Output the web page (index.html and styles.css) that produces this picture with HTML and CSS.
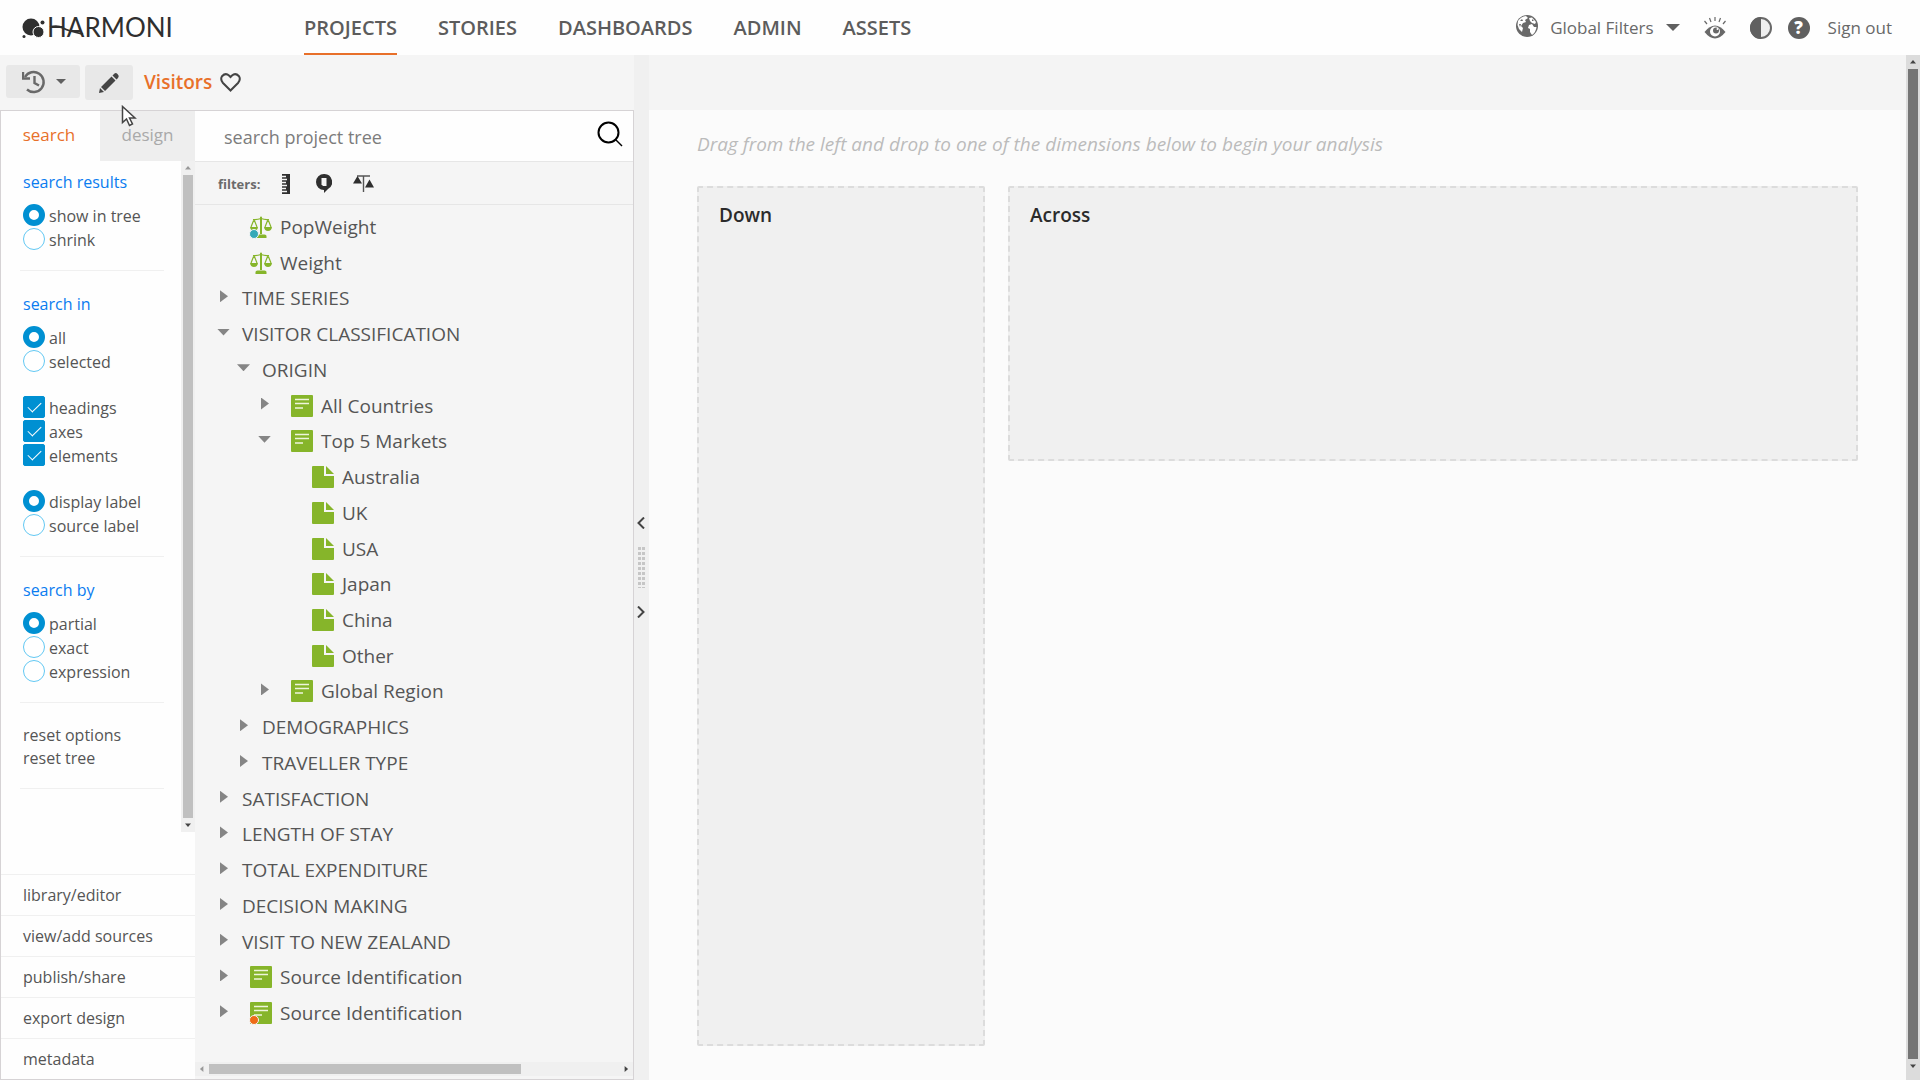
FILE: index.html
```html
<!DOCTYPE html>
<html lang="en">
  <head>
    <meta charset="UTF-8" />
    <meta name="viewport" content="width=device-width, initial-scale=1.0" />
    <title>Harmoni - Visitors</title>
    <link rel="stylesheet" href="styles.css">
  </head>
  <body>
    <!-- Shared icons -->
    <svg class="sprite" aria-hidden="true">
      <symbol id="axis" viewBox="0 0 22 22">
        <rect width="22" height="22" rx="1" fill="#86b52a" />
        <path d="M4 4.500H18M4 8.500H18M4 13H12" stroke="#eef5dc" stroke-width="1.600" />
      </symbol>
      <symbol id="element" viewBox="0 0 22 22">
        <path d="M1 0H12V10H22V21a1 1 0 0 1-1 1H1a1 1 0 0 1-1-1V1a1 1 0 0 1 1-1Z M14 0L22 8H14Z" fill="#86b52a" />
      </symbol>
      <symbol id="scale" viewBox="0 0 22 22">
        <path d="M10 1.500a1 1 0 0 1 2 0V18H10ZM5.500 20q0-1.500 2-1.500H14.500q2 0 2 1.500V22H5.500ZM0 11H8Q7.500 15 4 15T0 11ZM14 11H22Q21.500 15 18 15T14 11Z" fill="#86b52a" />
        <path d="M3 3.500Q7 4 11 2.500Q15 4 19 3.500M4 3.500L1 11M4 3.500L7 11M18 3.500L15 11M18 3.500L21 11" fill="none" stroke="#86b52a" stroke-width="1.200" />
      </symbol>
    </svg>

    <header class="header">
      <a class="logo" href="#" aria-label="Harmoni">
        <svg width="160" height="34" viewBox="0 0 160 34">
          <g fill="#2f2f2f">
            <circle cx="9" cy="15" r="8.500" />
            <circle cx="16.500" cy="20" r="5.500" stroke="#fff" stroke-width="1" />
            <circle cx="20.500" cy="10.500" r="2" />
            <circle cx="2" cy="24.500" r="1.500" />
          </g>
          <text class="logo-text" x="25" y="25">HARMONI</text>
          <path d="M28 15Q36 13 41 16T61 22" fill="none" stroke="#2f2f2f" stroke-width="2" />
        </svg>
      </a>
      <nav class="nav">
        <a class="active" href="#">PROJECTS</a>
        <a href="#">STORIES</a>
        <a href="#">DASHBOARDS</a>
        <a href="#">ADMIN</a>
        <a href="#">ASSETS</a>
      </nav>
      <div class="header-tools">
        <button class="global-filters" type="button">
          <svg class="globe" width="22" height="22" viewBox="0 0 22 22">
            <circle cx="11" cy="11" r="11" fill="#696969" />
            <path d="M2 6Q5 1.500 10 1L12 3L9 5L10 7L7 8L5 11L7 13L6 17L3 14L1.500 10ZM13 3L16 2.500L20 7L19 9L16 8L14 6ZM13 10L16 9L18 12L20.500 12Q20 17 16 20L14 17L14 14L12 13Z" fill="#fff" />
            <path d="M4 6L6 4L7 6ZM3 9L5 9L4 12ZM16 4L18 6L16 6Z" fill="#696969" />
          </svg>
          <span>Global Filters</span>
          <svg width="14" height="7" viewBox="0 0 14 7"><path d="M0 0H14L7 7Z" fill="#606060" /></svg>
        </button>
        <button type="button" aria-label="Preview">
          <svg width="22" height="24" viewBox="0 0 22 24">
            <path d="M.500 16Q11 3 21.500 16Q11 29 .500 16Z" fill="#696969" />
            <circle cx="11" cy="15.500" r="5" fill="#fff" />
            <circle cx="12" cy="14.500" r="3" fill="#696969" />
            <circle cx="13.500" cy="13" r="1" fill="#fff" />
            <path d="M.500 5L3 8M5.500 2L7 6M11 1V5M16.500 2L15 6M21.500 5L19 8" stroke="#696969" stroke-width="1.200" />
          </svg>
        </button>
        <button class="contrast" type="button" aria-label="Contrast">
          <svg width="22" height="22" viewBox="0 0 22 22">
            <circle cx="11" cy="11" r="10" fill="#eee" stroke="#696969" stroke-width="2" />
            <path d="M11 0A11 11 0 0 0 11 22Z" fill="#606060" />
          </svg>
        </button>
        <button class="help" type="button" aria-label="Help">?</button>
        <a class="sign-out" href="#">Sign out</a>
      </div>
    </header>

    <div class="workspace">
      <section class="left">
        <div class="toolbar">
          <button class="history" type="button" aria-label="History">
            <svg width="24" height="24" viewBox="0 0 24 24">
              <path d="M3 7A10 10 0 1 1 5 19.500" fill="none" stroke="#696969" stroke-width="2.400" />
              <path d="M1 2V8.500H8M12.500 6V13L17 15.500" fill="none" stroke="#696969" stroke-width="2.400" />
            </svg>
            <svg width="10" height="5" viewBox="0 0 10 5"><path d="M0 0H10L5 5Z" fill="#606060" /></svg>
          </button>
          <button class="edit" type="button" aria-label="Edit">
            <svg width="20" height="20" viewBox="0 0 20 20">
              <path d="M0 20L1 15L5 19ZM2 14L12.500 3.500L16.500 7.500L6 18ZM13.500 2.500L15.500.500Q17 -.500 18.500 1L19.500 2.500Q20 3.500 19 5L17.500 6.500Z" fill="#444" />
            </svg>
          </button>
          <h1>Visitors</h1>
          <button class="favourite" type="button" aria-label="Favourite">
            <svg width="21" height="19" viewBox="0 0 21 19">
              <path d="M10.500 17.500L3 10Q0 6.500 2 3.200Q5.500-.500 9 2.500L10.500 4L12 2.500Q15.500-.500 19 3.200Q21 6.500 18 10Z" fill="none" stroke="#444" stroke-width="2" />
            </svg>
          </button>
        </div>

        <div class="panel">
          <aside class="sidebar">
            <div class="tabs">
              <button class="tab active" type="button">search</button>
              <button class="tab" type="button">design</button>
            </div>

            <div class="options-scroll">
              <form class="options">
                <div class="group">
                  <h2>search results</h2>
                  <label><input type="radio" name="results" checked />show in tree</label>
                  <label><input type="radio" name="results" />shrink</label>
                </div>
                <div class="group">
                  <h2>search in</h2>
                  <label><input type="radio" name="scope" checked />all</label>
                  <label class="last"><input type="radio" name="scope" />selected</label>
                  <label><input type="checkbox" checked />headings</label>
                  <label><input type="checkbox" checked />axes</label>
                  <label class="last"><input type="checkbox" checked />elements</label>
                  <label><input type="radio" name="label" checked />display label</label>
                  <label><input type="radio" name="label" />source label</label>
                </div>
                <div class="group">
                  <h2>search by</h2>
                  <label><input type="radio" name="match" checked />partial</label>
                  <label><input type="radio" name="match" />exact</label>
                  <label><input type="radio" name="match" />expression</label>
                </div>
                <div class="group">
                  <button type="reset">reset options</button>
                  <button type="button">reset tree</button>
                </div>
              </form>
              <div class="scrollbar" aria-hidden="true">
                <i class="arrow up faded"></i>
                <i class="thumb"></i>
                <i class="arrow down"></i>
              </div>
            </div>

            <nav class="side-links">
              <a href="#">library/editor</a>
              <a href="#">view/add sources</a>
              <a href="#">publish/share</a>
              <a href="#">export design</a>
              <a href="#">metadata</a>
            </nav>
          </aside>

          <div class="project">
            <div class="search-box">
              <input type="text" placeholder="search project tree" aria-label="search project tree" />
              <button type="button" aria-label="Search">
                <svg width="26" height="26" viewBox="0 0 26 26">
                  <circle cx="11.500" cy="11.500" r="10" fill="none" stroke="#000" stroke-width="2" />
                  <path d="M18.500 18.500L25 25" stroke="#000" stroke-width="1.400" />
                </svg>
              </button>
            </div>

            <div class="filters">
              <span>filters:</span>
              <button type="button" aria-label="Axes">
                <svg width="8" height="20" viewBox="0 0 8 20">
                  <path d="M0 0H8V20H0Z" fill="#2f2f2f" />
                  <path d="M0 2.500H4M0 5.500H5M0 8.500H4M0 11.500H5M0 14.500H4M0 17.500H5" stroke="#f5f5f5" stroke-width="1.500" />
                </svg>
              </button>
              <button type="button" aria-label="Elements">
                <svg width="16" height="19" viewBox="0 0 16 19">
                  <path d="M8 0A8 8 0 0 1 12 15L8 19V16A8 8 0 0 1 8 0Z" fill="#2f2f2f" />
                  <path d="M5.500 4H10.500V12H7L5.500 10.500Z" fill="#f5f5f5" />
                </svg>
              </button>
              <button type="button" aria-label="Weights">
                <svg width="21" height="17" viewBox="0 0 21 17">
                  <path d="M4 1H17M10.500 1V17" stroke="#555" stroke-width="1.400" />
                  <path d="M4.500 1L9 8.500H0ZM16.500 4.500L21 12.500H12Z" fill="#2f2f2f" />
                </svg>
              </button>
            </div>

            <ul class="tree">
              <li class="item"><span class="icon"><svg><use href="#scale" /></svg><i class="dot blue"></i></span>PopWeight</li>
              <li class="item"><span class="icon"><svg><use href="#scale" /></svg></span>Weight</li>
              <li><button class="toggle" aria-label="Expand"></button>TIME SERIES</li>
              <li><button class="toggle open" aria-label="Collapse"></button>VISITOR CLASSIFICATION</li>
              <li class="level-1"><button class="toggle open" aria-label="Collapse"></button>ORIGIN</li>
              <li class="level-2"><button class="toggle" aria-label="Expand"></button><span class="icon"><svg><use href="#axis" /></svg></span>All Countries</li>
              <li class="level-2"><button class="toggle open" aria-label="Collapse"></button><span class="icon"><svg><use href="#axis" /></svg></span>Top 5 Markets</li>
              <li class="item level-3"><span class="icon"><svg><use href="#element" /></svg></span>Australia</li>
              <li class="item level-3"><span class="icon"><svg><use href="#element" /></svg></span>UK</li>
              <li class="item level-3"><span class="icon"><svg><use href="#element" /></svg></span>USA</li>
              <li class="item level-3"><span class="icon"><svg><use href="#element" /></svg></span>Japan</li>
              <li class="item level-3"><span class="icon"><svg><use href="#element" /></svg></span>China</li>
              <li class="item level-3"><span class="icon"><svg><use href="#element" /></svg></span>Other</li>
              <li class="level-2"><button class="toggle" aria-label="Expand"></button><span class="icon"><svg><use href="#axis" /></svg></span>Global Region</li>
              <li class="level-1"><button class="toggle" aria-label="Expand"></button>DEMOGRAPHICS</li>
              <li class="level-1"><button class="toggle" aria-label="Expand"></button>TRAVELLER TYPE</li>
              <li><button class="toggle" aria-label="Expand"></button>SATISFACTION</li>
              <li><button class="toggle" aria-label="Expand"></button>LENGTH OF STAY</li>
              <li><button class="toggle" aria-label="Expand"></button>TOTAL EXPENDITURE</li>
              <li><button class="toggle" aria-label="Expand"></button>DECISION MAKING</li>
              <li><button class="toggle" aria-label="Expand"></button>VISIT TO NEW ZEALAND</li>
              <li><button class="toggle" aria-label="Expand"></button><span class="icon"><svg><use href="#axis" /></svg></span>Source Identification</li>
              <li><button class="toggle" aria-label="Expand"></button><span class="icon"><svg><use href="#axis" /></svg><i class="dot orange"></i></span>Source Identification</li>
            </ul>

            <div class="scrollbar horizontal" aria-hidden="true">
              <i class="arrow prev faded"></i>
              <span class="track"><i class="thumb"></i></span>
              <i class="arrow next"></i>
            </div>
          </div>
        </div>
      </section>

      <div class="splitter">
        <button type="button" aria-label="Collapse left">
          <svg width="8" height="12" viewBox="0 0 8 12"><path d="M7 .500L1.500 6L7 11.500" fill="none" stroke="#444" stroke-width="2" /></svg>
        </button>
        <span class="grip"></span>
        <button type="button" aria-label="Collapse right">
          <svg width="8" height="12" viewBox="0 0 8 12"><path d="M1 .500L6.500 6L1 11.500" fill="none" stroke="#444" stroke-width="2" /></svg>
        </button>
      </div>

      <main class="analysis">
        <div class="analysis-bar"></div>
        <div class="canvas">
          <p class="hint">Drag from the left and drop to one of the dimensions below to begin your analysis</p>
          <div class="dimensions">
            <section class="drop down-zone"><h2>Down</h2></section>
            <section class="drop across-zone"><h2>Across</h2></section>
          </div>
        </div>
      </main>

      <div class="scrollbar page-scroll" aria-hidden="true">
        <i class="arrow up"></i>
        <i class="thumb"></i>
        <i class="arrow down"></i>
      </div>
    </div>

    <!-- Mouse pointer -->
    <svg class="pointer" width="16" height="22" viewBox="0 0 16 22" aria-hidden="true">
      <path d="M1.500 1.500V17.500L5.500 14L8.500 20.500L11.500 19L8.500 13H14Z" fill="#fff" stroke="#444" stroke-width="1.500" />
    </svg>
  </body>
</html>
```

FILE: styles.css
```css
* {
  box-sizing: border-box;
}

body {
  margin: 0;
  height: 100vh;
  display: flex;
  flex-direction: column;
  position: relative;
  overflow: hidden;
  font-family: "Open Sans", "Noto Sans", sans-serif;
  color: #555;
  background-color: #f5f5f5;
}

button {
  padding: 0;
  border: 0;
  background: none;
  font: inherit;
  color: inherit;
  cursor: pointer;
}

button svg {
  display: block;
}

a {
  color: inherit;
  text-decoration: none;
}

.sprite {
  display: none;
}

/* Header */

.header {
  flex: none;
  height: 55px;
  padding: 0 28px 0 22px;
  display: flex;
  align-items: stretch;
  background-color: #fefefe;
}

.logo {
  width: 282px;
  padding-top: 12px;
}

.logo svg {
  display: block;
  overflow: visible;
}

.logo-text {
  font-family: Lato, sans-serif;
  font-size: 26px;
  fill: #2f2f2f;
}

.nav {
  display: flex;
  gap: 41px;
  font-size: 20px;
  font-weight: 600;
  line-height: 55px;
  color: #5c5c5c;
}

.nav a.active {
  border-bottom: 2px solid #e8702a;
}

.header-tools {
  margin-left: auto;
  display: flex;
  align-items: center;
  gap: 16px;
  font-size: 17px;
  font-weight: 500;
  color: #696969;
}

.global-filters {
  display: flex;
  align-items: center;
  gap: 12px;
  margin-right: 8px;
}

.globe {
  margin-bottom: 4px;
}

.contrast {
  margin-left: 8px;
}

.help {
  width: 22px;
  height: 22px;
  border-radius: 50%;
  background-color: #606060;
  color: #fff;
  font-weight: 800;
  line-height: 22px;
}

.sign-out {
  margin-left: 2px;
}

/* Workspace */

.workspace {
  flex: 1;
  min-height: 0;
  display: flex;
}

.left {
  width: 634px;
  display: flex;
  flex-direction: column;
}

.toolbar {
  flex: none;
  height: 55px;
  padding: 10px 6px;
  display: flex;
  align-items: flex-start;
}

.history {
  width: 74px;
  height: 33px;
  margin-right: 5px;
  padding-left: 2px;
  display: flex;
  align-items: center;
  justify-content: center;
  gap: 10px;
  border-radius: 3px;
  background-color: #e8e8e8;
}

.edit {
  width: 48px;
  height: 35px;
  margin-right: 11px;
  display: flex;
  align-items: center;
  justify-content: center;
  border-radius: 3px;
  background-color: #e8e8e8;
}

.toolbar h1 {
  margin: 0 8px 0 0;
  font-size: 19px;
  font-weight: 600;
  line-height: 35px;
  color: #e8702a;
}

.favourite {
  padding-top: 8px;
}

.panel {
  flex: 1;
  min-height: 0;
  display: flex;
  border: 1px solid #d6d3d5;
}

.sidebar {
  width: 194px;
  display: flex;
  flex-direction: column;
  background-color: #fefefe;
  font-size: 16px;
}

.tabs {
  display: flex;
  height: 50px;
  font-size: 17px;
}

.tab {
  flex: 1;
  padding-bottom: 4px;
  color: #a9a9a9;
  background-color: #eeeeee;
}

.tab.active {
  flex: none;
  width: 99px;
  padding-right: 3px;
  color: #e8702a;
  background-color: #fefefe;
}

.options-scroll {
  height: 671px;
  display: flex;
}

.options {
  flex: 1;
  padding-left: 19px;
}

.group {
  width: 144px;
  padding: 21px 0 18px 3px;
  border-bottom: 1px solid #f0f0f0;
}

.group:first-child {
  padding-top: 9px;
}

.group h2 {
  margin: 0 0 10px;
  font-size: 16px;
  font-weight: 400;
  line-height: 24px;
  color: #0a7cf0;
}

.group label {
  height: 24px;
  display: flex;
  align-items: flex-start;
  gap: 4px;
  line-height: 24px;
  white-space: nowrap;
}

.group label.last {
  margin-bottom: 22px;
}

.group button {
  display: block;
  line-height: 23px;
}

.group input {
  appearance: none;
  flex: none;
  width: 22px;
  height: 22px;
  margin: 0;
  border: 1px solid #62c8f3;
  border-radius: 50%;
  background-color: #fff;
}

.group input[type="radio"]:checked {
  border: 6px solid #0090d2;
}

.group input[type="checkbox"] {
  display: flex;
  justify-content: center;
  align-items: center;
  border-color: #0090d2;
  border-radius: 2px;
  background-color: #0090d2;
}

.group input[type="checkbox"]::after {
  content: "";
  width: 6px;
  height: 12px;
  margin-bottom: 4px;
  border: solid #fff;
  border-width: 0 1px 1px 0;
  transform: rotate(45deg);
}

.side-links {
  margin-top: auto;
}

.side-links a {
  display: block;
  padding-left: 22px;
  border-top: 1px solid #f0f0f0;
  line-height: 40px;
}

.scrollbar {
  width: 14px;
  display: flex;
  flex-direction: column;
  align-items: center;
  background-color: #f0f0f0;
}

.scrollbar .thumb {
  flex: 1;
  width: 10px;
  background-color: #c0c0c0;
}

.arrow {
  width: 6px;
  height: 14px;
  background-color: #444;
  clip-path: polygon(0 60%, 100% 60%, 50% 35%);
}

.arrow.down {
  clip-path: polygon(0 40%, 100% 40%, 50% 65%);
}

.arrow.faded {
  background-color: #999;
}

.scrollbar.horizontal {
  width: auto;
  height: 14px;
  margin-bottom: 3px;
  flex-direction: row;
}

.horizontal .track {
  flex: 1;
}

.horizontal .thumb {
  display: block;
  width: 76%;
  height: 10px;
}

.horizontal .arrow {
  width: 14px;
  height: 6px;
  clip-path: polygon(35% 50%, 60% 0, 60% 100%);
}

.horizontal .arrow.next {
  clip-path: polygon(65% 50%, 40% 0, 40% 100%);
}

/* Project tree */

.project {
  flex: 1;
  display: flex;
  flex-direction: column;
}

.search-box {
  height: 51px;
  display: flex;
  align-items: center;
  background-color: #fefefe;
  border-bottom: 1px solid #e6e6e6;
}

.search-box input {
  flex: 1;
  padding: 2px 0 0 29px;
  border: 0;
  outline: 0;
  background: none;
  font: inherit;
  font-size: 18px;
}

.search-box input::placeholder {
  color: #7c7c7c;
}

.search-box button {
  padding: 0 10px 4px 0;
}

.filters {
  height: 43px;
  padding: 1px 0 0 23px;
  display: flex;
  align-items: center;
  border-bottom: 1px solid #e6e6e6;
}

.filters span {
  font-size: 13px;
  font-weight: 700;
  color: #6b6b6b;
}

.filters button {
  margin-left: 22px;
}

.filters button + button {
  margin-left: 26px;
}

.filters button + button + button {
  margin-left: 21px;
}

.tree {
  flex: 1;
  margin: 0;
  padding: 4px 0 31px 22px;
  display: grid;
  grid-auto-rows: 1fr;
  list-style: none;
  font-size: 19px;
}

.tree li {
  display: flex;
  align-items: center;
  line-height: 24px;
  white-space: nowrap;
}

.tree .item {
  padding-left: 25px;
}

.tree .level-1 {
  padding-left: 20px;
}

.tree .level-2 {
  padding-left: 41px;
}

.tree .level-3 {
  padding-left: 87px;
}

.toggle {
  width: 25px;
  height: 16px;
  padding: 0 0 4px 3px;
}

.toggle::before {
  content: "";
  display: block;
  width: 8px;
  height: 12px;
  background-color: #858585;
  clip-path: polygon(0 0, 100% 50%, 0 100%);
}

.toggle.open {
  padding-left: 0;
}

.toggle.open::before {
  width: 13px;
  height: 7px;
  clip-path: polygon(0 0, 100% 0, 50% 100%);
}

.icon {
  position: relative;
  width: 22px;
  height: 22px;
  margin: 0 8px;
}

.icon svg {
  display: block;
  width: 22px;
  height: 22px;
}

.dot {
  position: absolute;
  left: -1px;
  bottom: -1px;
  width: 10px;
  height: 10px;
  border: 1px solid #f5f5f5;
  border-radius: 50%;
}

.dot.blue {
  background-color: #35a9b8;
}

.dot.orange {
  background-color: #ee6b17;
}

/* Splitter */

.splitter {
  width: 15px;
  padding-right: 1px;
  display: flex;
  flex-direction: column;
  align-items: center;
  justify-content: center;
  gap: 18px;
  background-color: #f0f0f0;
}

.grip {
  width: 7px;
  height: 41px;
  background:
    linear-gradient(90deg, transparent 3px, #f0f0f0 3px, #f0f0f0 4px, transparent 4px),
    repeating-linear-gradient(#c6c6c6 0, #c6c6c6 3px, transparent 3px, transparent 5px);
}

/* Analysis */

.analysis {
  flex: 1;
  display: flex;
  flex-direction: column;
}

.analysis-bar {
  height: 55px;
  background-color: #f4f4f4;
}

.canvas {
  flex: 1;
  padding: 20px 48px 34px;
  display: flex;
  flex-direction: column;
  background-color: #fbfbfb;
}

.hint {
  margin: 0 0 28px;
  font-size: 19px;
  font-style: italic;
  line-height: 28px;
  color: #bbb;
}

.dimensions {
  flex: 1;
  display: grid;
  grid-template-columns: 288px 1fr;
  gap: 23px;
}

.drop {
  padding: 15px 20px;
  border: 2px dashed #dcdcdc;
  border-radius: 2px;
  background-color: #f0f0f0;
}

.across-zone {
  height: 275px;
}

.drop h2 {
  margin: 0;
  font-size: 19px;
  font-weight: 600;
  line-height: 24px;
  color: #2b2b2b;
}

.page-scroll {
  padding-bottom: 7px;
  background-color: #dcdcdc;
}

.page-scroll .thumb {
  background-color: #757575;
}

.pointer {
  position: absolute;
  left: 121px;
  top: 105px;
}
```
